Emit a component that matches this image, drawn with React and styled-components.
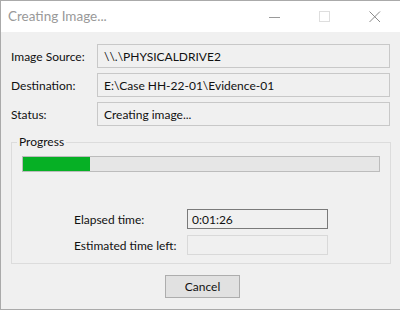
import styled, { createGlobalStyle } from 'styled-components';

const GlobalStyle = createGlobalStyle`
  html, body {
    margin: 0;
    padding: 0;
    background: #ffffff;
  }
  body {
    font-family: Lato, "Liberation Sans", sans-serif;
    font-size: 12px;
    color: #111;
  }
`;

const Window = styled.div`
  width: 400px;
  height: 310px;
  box-sizing: border-box;
  border: 1px solid #aaaaaa;
  border-right: none;
  display: flex;
  flex-direction: column;
  background: #f0f0f0;
`;

const TitleBar = styled.div`
  height: 31px;
  flex: none;
  background: #ffffff;
  display: flex;
  align-items: center;
  padding-left: 7px;
`;

const Title = styled.div`
  flex: 1;
  color: #999999;
  font-size: 13.5px;
  margin-top: -1px;
`;

const TitleButton = styled.div`
  width: 50px;
  height: 31px;
  display: flex;
  align-items: center;
  justify-content: center;
`;

const Body = styled.div`
  flex: 1;
  padding: 12px 9px 0 10px;
  display: flex;
  flex-direction: column;
`;

const InfoGrid = styled.div`
  display: grid;
  grid-template-columns: 86px 293px;
  row-gap: 5px;
  align-items: center;
`;

const Label = styled.div`
  white-space: nowrap;
  color: #111;
`;

const Field = styled.div`
  box-sizing: border-box;
  height: ${props => props.$h || 24}px;
  border: 1px solid ${props => props.$border || '#c8c8c8'};
  background: #f0f0f0;
  padding: 0 ${props => props.$pad || 6}px;
  display: flex;
  align-items: center;
  white-space: nowrap;
  color: #111;
`;

const Group = styled.fieldset`
  margin: 8px 0 0 0;
  padding: 6px 10px 8px 10px;
  border: 1px solid #dcdcdc;
  border-radius: 0;
  width: 380px;
  box-sizing: border-box;
`;

const Legend = styled.legend`
  padding: 0 2px;
  margin-left: -5px;
  line-height: 16px;
  color: #111;
`;

const ProgressTrack = styled.div`
  height: 16px;
  box-sizing: border-box;
  border: 1px solid #bcbcbc;
  background: #e6e6e6;
  display: flex;
`;

const ProgressFill = styled.div`
  background: #06b025;
  height: 100%;
`;

const TimeGrid = styled.div`
  display: grid;
  grid-template-columns: 113px 141px;
  row-gap: 6px;
  margin: 37px 0 0 52px;
  align-items: center;
`;

const Footer = styled.div`
  display: flex;
  justify-content: center;
  padding-top: 11px;
`;

const Button = styled.button`
  width: 75px;
  height: 23px;
  box-sizing: border-box;
  border: 1px solid #adadad;
  background: #e1e1e1;
  font-family: inherit;
  font-size: 12px;
  color: #111;
  padding: 0;
  margin-left: 3px;
`;

export default function App() {
  const progress = 18.8;
  return (
    <>
      <GlobalStyle />
      <Window>
        <TitleBar>
          <Title>Creating Image...</Title>
          <TitleButton>
            <svg width="12" height="12" viewBox="0 0 12 12">
              <line x1="0" y1="6.5" x2="11" y2="6.5" stroke="#9a9a9a" strokeWidth="1" />
            </svg>
          </TitleButton>
          <TitleButton>
            <svg width="12" height="12" viewBox="0 0 12 12">
              <rect x="0.5" y="0.5" width="10" height="10" fill="none" stroke="#dedede" strokeWidth="1" />
            </svg>
          </TitleButton>
          <TitleButton>
            <svg width="12" height="12" viewBox="0 0 12 12">
              <path d="M0.5 0.5 L11 11 M11 0.5 L0.5 11" stroke="#8a8a8a" strokeWidth="1" />
            </svg>
          </TitleButton>
        </TitleBar>
        <Body>
          <InfoGrid>
            <Label>Image Source:</Label>
            <Field>\\.\PHYSICALDRIVE2</Field>
            <Label>Destination:</Label>
            <Field>E:\Case HH-22-01\Evidence-01</Field>
            <Label>Status:</Label>
            <Field>Creating image...</Field>
          </InfoGrid>
          <Group>
            <Legend>Progress</Legend>
            <ProgressTrack>
              <ProgressFill style={{ width: `${progress}%` }} />
            </ProgressTrack>
            <TimeGrid>
              <Label>Elapsed time:</Label>
              <Field $h={20} $border="#7a7a7a" $pad={4}>0:01:26</Field>
              <Label>Estimated time left:</Label>
              <Field $h={20} $border="#d9d9d9" $pad={4} />
            </TimeGrid>
          </Group>
          <Footer>
            <Button>Cancel</Button>
          </Footer>
        </Body>
      </Window>
    </>
  );
}
